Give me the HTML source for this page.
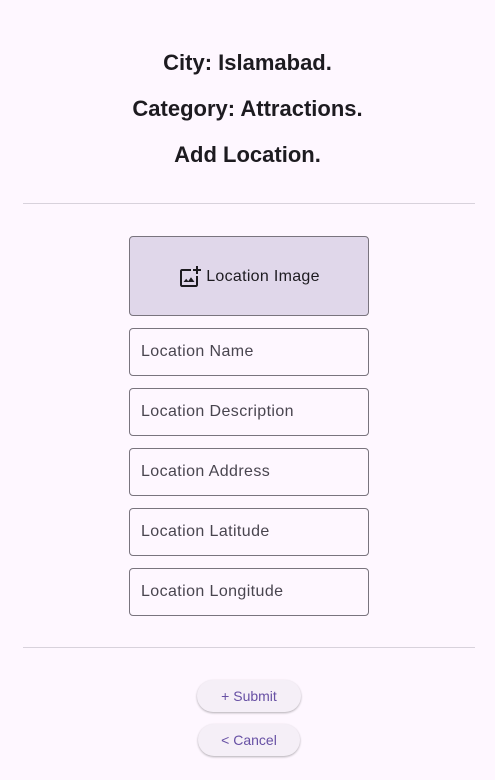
<!DOCTYPE html>
<html><head><style>
body{margin:0;width:495px;height:780px;background:#fef7ff;font-family:"Liberation Sans",sans-serif;position:relative;overflow:hidden}
.t{position:absolute;left:0;width:495px;text-align:center;font-size:22px;color:#1d1b20;font-weight:bold}
.hr{position:absolute;left:23px;width:452px;height:1px;background:#d8d2dc}
.f{position:absolute;left:129px;height:46px;border:1px solid #79747e;border-radius:4px;color:#49454f;font-size:16px;line-height:46px;padding-left:11px;box-sizing:content-box;width:227px;letter-spacing:.4px}
.img{position:absolute;left:129px;top:236px;width:238px;height:78px;border:1px solid #79747e;border-radius:4px;background:#e0d7ea;display:flex;align-items:center;justify-content:center;color:#1d1b20;font-size:16px;letter-spacing:.3px;padding-top:2px;box-sizing:content-box;height:76px}
.b{position:absolute;height:32px;border-radius:16px;background:#f5eff7;box-shadow:0 1px 2px rgba(0,0,0,.3);color:#6750a4;font-size:14px;text-align:center;line-height:32px}
</style></head><body>
<div class="t" style="top:50px">City: Islamabad.</div>
<div class="t" style="top:96px">Category: Attractions.</div>
<div class="t" style="top:142px">Add Location.</div>
<div class="hr" style="top:203px"></div>
<div class="img"><svg width="24" height="24" viewBox="0 0 24 24" style="margin-right:4px"><path d="M18 20H4V6h9V4H4c-1.1 0-2 .9-2 2v14c0 1.1.9 2 2 2h14c1.1 0 2-.9 2-2v-9h-2v9zm-7.8-3.8-2-2.4L5.5 17h11l-3.5-4.7-2.8 3.9zM20 4V1h-2v3h-3c.01.01 0 2 0 2h3v2.99c.01.01 2 0 2 0V6h3V4h-3z" fill="#1d1b20"/></svg>Location Image</div>
<div class="f" style="top:328px">Location Name</div>
<div class="f" style="top:388px">Location Description</div>
<div class="f" style="top:448px">Location Address</div>
<div class="f" style="top:508px">Location Latitude</div>
<div class="f" style="top:568px">Location Longitude</div>
<div class="hr" style="top:647px"></div>
<div class="b" style="left:197px;top:680px;width:104px">+ Submit</div>
<div class="b" style="left:198px;top:724px;width:102px">&lt; Cancel</div>
</body></html>
